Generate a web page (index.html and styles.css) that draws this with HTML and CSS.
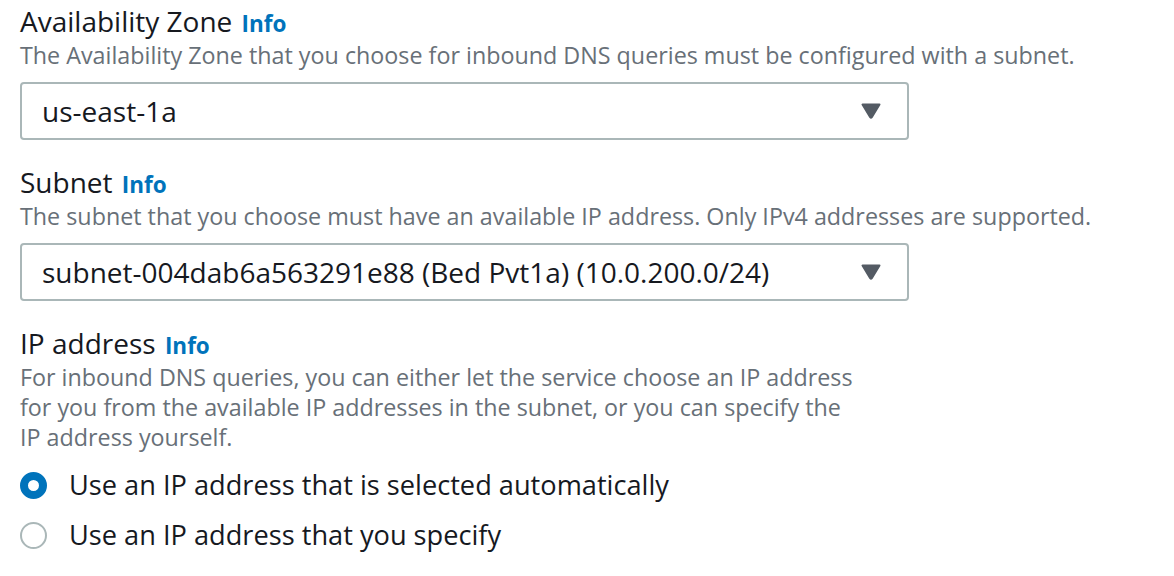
FILE: index.html
```html
<!DOCTYPE html>
<html lang="en">
<head>
<meta charset="utf-8">
<title>Inbound endpoint</title>
<link rel="stylesheet" href="styles.css">
</head>
<body>
<div class="form">
  <div class="field">
    <div class="label">Availability Zone <a class="info">Info</a></div>
    <div class="desc">The Availability Zone that you choose for inbound DNS queries must be configured with a subnet.</div>
    <div class="select"><span class="value">us-east-1a</span><svg class="caret" width="20" height="16" viewBox="0 0 20 16"><path d="M1.5 1.5 H18.5 L10.8 14.2 Q10 15.3 9.2 14.2 Z" fill="#545b64" stroke="#545b64" stroke-width="2" stroke-linejoin="round"/></svg></div>
  </div>
  <div class="field">
    <div class="label">Subnet <a class="info">Info</a></div>
    <div class="desc">The subnet that you choose must have an available IP address. Only IPv4 addresses are supported.</div>
    <div class="select"><span class="value">subnet-004dab6a563291e88 (Bed Pvt1a) (10.0.200.0/24)</span><svg class="caret" width="20" height="16" viewBox="0 0 20 16"><path d="M1.5 1.5 H18.5 L10.8 14.2 Q10 15.3 9.2 14.2 Z" fill="#545b64" stroke="#545b64" stroke-width="2" stroke-linejoin="round"/></svg></div>
  </div>
  <div class="field">
    <div class="label">IP address <a class="info">Info</a></div>
    <div class="desc narrow">For inbound DNS queries, you can either let the service choose an IP address for you from the available IP addresses in the subnet, or you can specify the IP address yourself.</div>
    <div class="radios">
      <div class="radio"><span class="dot checked"></span><span class="rlabel">Use an IP address that is selected automatically</span></div>
      <div class="radio"><span class="dot"></span><span class="rlabel">Use an IP address that you specify</span></div>
    </div>
  </div>
</div>
</body>
</html>
```
FILE: styles.css
```css
html, body { margin: 0; padding: 0; background: #fff; }
body { font-family: "Open Sans", "Noto Sans", sans-serif; color: #16191f; }
.form { padding: 2px 0 0 20px; display: flex; flex-direction: column; gap: 23px; }
.field { display: flex; flex-direction: column; }
.label { font-size: 28px; line-height: 38px; height: 38px; }
.info { color: #0073bb; font-weight: 700; font-size: 22.5px; line-height: 1; margin-left: 2px; }
.desc { font-size: 23.3px; line-height: 30px; color: #687078; }
.desc.narrow { width: 838px; }
.select { margin-top: 12px; width: 889px; height: 58px; box-sizing: border-box; border: 2px solid #aab7b8; border-radius: 4px; display: flex; align-items: center; justify-content: space-between; padding: 0 26px 0 20px; }
.value { font-size: 28px; }
.caret { display: block; }
.radios { display: flex; flex-direction: column; gap: 14px; margin-top: 15px; }
.radio { display: flex; align-items: center; gap: 22px; height: 36px; }
.dot { width: 27px; height: 27px; box-sizing: border-box; border-radius: 50%; border: 2px solid #aab7b8; flex: none; }
.dot.checked { border: 8.5px solid #0073bb; }
.rlabel { font-size: 27.2px; line-height: 36px; }
```
